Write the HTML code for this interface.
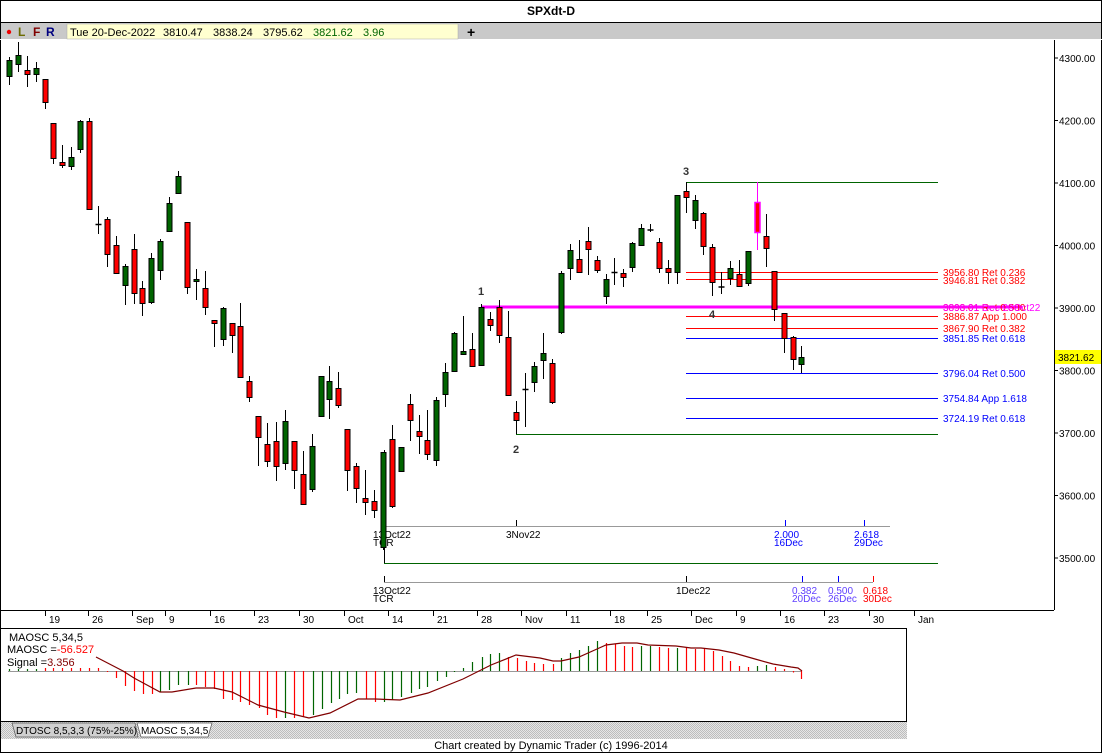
<!DOCTYPE html><html><head><meta charset="utf-8"><style>
body{margin:0;background:#fff;}
svg{display:block;font-family:"Liberation Sans",sans-serif;}
</style></head><body>
<svg id="s" width="1102" height="753" xmlns="http://www.w3.org/2000/svg">
<defs><pattern id="h" width="2" height="2" patternUnits="userSpaceOnUse"><rect width="2" height="2" fill="#e6e6e6"/><rect width="1" height="1" fill="#bdbdbd"/><rect x="1" y="1" width="1" height="1" fill="#bdbdbd"/></pattern></defs>
<rect x="0.5" y="0.5" width="1101" height="752" fill="#fff" stroke="#000"/>
<text x="551" y="15" font-size="12" font-weight="bold" text-anchor="middle">SPXdt-D</text>
<line x1="0" y1="22.5" x2="1102" y2="22.5" stroke="#000"/>
<rect x="1" y="23" width="1100" height="17" fill="#c9c9c9"/>
<line x1="0" y1="39.5" x2="1102" y2="39.5" stroke="#fff"/>
<circle cx="9" cy="32" r="2.2" fill="#e00"/>
<text x="18" y="36" font-size="12" font-weight="bold" fill="#6b6b00">L</text>
<text x="33" y="36" font-size="12" font-weight="bold" fill="#800000">F</text>
<text x="46" y="36" font-size="12" font-weight="bold" fill="#000080">R</text>
<rect x="67" y="24" width="391" height="15" fill="#ffffd0" stroke="#aaa" stroke-width="0.5"/>
<g font-size="11"><text x="70" y="36">Tue 20-Dec-2022</text><text x="163" y="36">3810.47</text><text x="213" y="36">3838.24</text><text x="263" y="36">3795.62</text><text x="313" y="36" fill="#006400">3821.62</text><text x="363" y="36" fill="#006400">3.96</text></g>
<text x="467" y="37" font-size="14" font-weight="bold">+</text>
<line x1="1054.5" y1="40" x2="1054.5" y2="610" stroke="#000"/>
<g id="pax" font-size="10"></g>
<rect x="1055" y="350" width="46" height="14" fill="#ffff00"/>
<text x="1058" y="361" font-size="10">3821.62</text>
<line x1="686" y1="182.5" x2="938" y2="182.5" stroke="#006400"/>
<line x1="686.5" y1="182" x2="686.5" y2="190" stroke="#000"/>
<g stroke="#f00"><line x1="686" y1="272.5" x2="938" y2="272.5"/><line x1="686" y1="279.5" x2="938" y2="279.5"/><line x1="686" y1="316.5" x2="938" y2="316.5"/><line x1="686" y1="328.5" x2="938" y2="328.5"/></g>
<g stroke="#00f"><line x1="686" y1="338.5" x2="938" y2="338.5"/><line x1="686" y1="373.5" x2="938" y2="373.5"/><line x1="686" y1="398.5" x2="938" y2="398.5"/><line x1="686" y1="418.5" x2="938" y2="418.5"/></g>
<line x1="516" y1="434.5" x2="938" y2="434.5" stroke="#006400"/>
<line x1="516.5" y1="420" x2="516.5" y2="434" stroke="#000"/>
<line x1="482" y1="307" x2="1022" y2="307" stroke="#ff00ff" stroke-width="3"/>
<g font-size="10"><text x="943" y="276" fill="#f00">3956.80 Ret 0.236</text><text x="943" y="284" fill="#f00">3946.81 Ret 0.382</text>
<text x="943" y="311" fill="#f00">3893.01 Ret 0.500</text><text x="943" y="311" fill="#ff00ff">3898.91 Dec 28Oct22</text>
<text x="943" y="320" fill="#f00">3886.87 App 1.000</text><text x="943" y="332" fill="#f00">3867.90 Ret 0.382</text>
<text x="943" y="342" fill="#00f">3851.85 Ret 0.618</text><text x="943" y="377" fill="#00f">3796.04 Ret 0.500</text>
<text x="943" y="402" fill="#00f">3754.84 App 1.618</text><text x="943" y="422" fill="#00f">3724.19 Ret 0.618</text></g>
<g font-size="11" font-weight="bold" fill="#333"><text x="478" y="295">1</text><text x="513" y="453">2</text><text x="683" y="175">3</text><text x="709" y="318">4</text></g>
<line x1="384" y1="526.5" x2="890" y2="526.5" stroke="#999"/>
<line x1="516.5" y1="520" x2="516.5" y2="526" stroke="#000"/>
<line x1="785.5" y1="520" x2="785.5" y2="526" stroke="#00f"/><line x1="864.5" y1="520" x2="864.5" y2="526" stroke="#00f"/>
<line x1="384.5" y1="450" x2="384.5" y2="563" stroke="#000"/>
<line x1="384" y1="563.5" x2="938" y2="563.5" stroke="#006400"/>
<line x1="384" y1="582.5" x2="873" y2="582.5" stroke="#999"/>
<g stroke="#000"><line x1="384.5" y1="576" x2="384.5" y2="582"/><line x1="686.5" y1="576" x2="686.5" y2="582"/></g>
<line x1="802.5" y1="576" x2="802.5" y2="582" stroke="#00f"/><line x1="838.5" y1="576" x2="838.5" y2="582" stroke="#00f"/><line x1="873.5" y1="576" x2="873.5" y2="582" stroke="#f00"/>
<g font-size="10"><text x="373" y="538">13Oct22</text><text x="373" y="546">TCR</text><text x="506" y="538">3Nov22</text>
<text x="774" y="538" fill="#00f">2.000</text><text x="774" y="546" fill="#00f">16Dec</text><text x="854" y="538" fill="#00f">2.618</text><text x="854" y="546" fill="#00f">29Dec</text>
<text x="373" y="594">13Oct22</text><text x="373" y="602">TCR</text><text x="676" y="594">1Dec22</text>
<text x="792" y="594" fill="#6040ff">0.382</text><text x="792" y="602" fill="#6040ff">20Dec</text><text x="828" y="594" fill="#6040ff">0.500</text><text x="828" y="602" fill="#6040ff">26Dec</text><text x="863" y="594" fill="#f00">0.618</text><text x="863" y="602" fill="#f00">30Dec</text></g>
<g id="cd"></g>
<line x1="0" y1="610.5" x2="1054" y2="610.5" stroke="#000"/>
<g id="dax" font-size="10"></g>
<rect x="0.5" y="628.5" width="906" height="93" fill="#fff" stroke="#000"/>
<line x1="8" y1="671.5" x2="801" y2="671.5" stroke="#999"/>
<g id="hist"></g>
<polyline id="sig" fill="none" stroke="#800000" stroke-width="1.2"/>
<g font-size="11"><text x="9" y="641">MAOSC 5,34,5</text><text x="7" y="653">MAOSC =<tspan fill="#f00">-56.527</tspan></text><text x="7" y="666">Signal =<tspan fill="#800000">3.356</tspan></text></g>
<rect x="1" y="722" width="906" height="17" fill="url(#h)"/>
<path d="M12 723 L135 723 L138 737 L16 737 Z" fill="#d0d0d0" stroke="#555" stroke-width="0.7"/>
<path d="M137 723 L212 723 L208 737 L141 737 Z" fill="#fff" stroke="#555" stroke-width="0.7"/>
<text x="16" y="734" font-size="10">DTOSC 8,5,3,3 (75%-25%)</text>
<text x="141" y="734" font-size="10">MAOSC 5,34,5</text>
<text x="551" y="749" font-size="11" text-anchor="middle">Chart created by Dynamic Trader  (c) 1996-2014</text>
</svg>
<script>
var NS="http://www.w3.org/2000/svg";
function el(p,t,a,tx){var e=document.createElementNS(NS,t);for(var k in a)e.setAttribute(k,a[k]);if(tx)e.textContent=tx;document.getElementById(p).appendChild(e);return e;}
var P=[4300,4200,4100,4000,3900,3800,3700,3600,3500];
P.forEach(function(p){var y=58+(4300-p)*0.625;el("pax","line",{x1:1054,y1:y,x2:1058,y2:y,stroke:"#000"});el("pax","text",{x:1059,y:y+4},p.toFixed(2));});
var D=[[49,"19"],[92,"26"],[136,"Sep"],[169,"9"],[214,"16"],[258,"23"],[303,"30"],[348,"Oct"],[392,"14"],[437,"21"],[481,"28"],[525,"Nov"],[570,"11"],[614,"18"],[651,"25"],[695,"Dec"],[740,"9"],[784,"16"],[828,"23"],[873,"30"],[918,"Jan"]];
D.forEach(function(d){el("dax","line",{x1:d[0]-3.5,y1:611,x2:d[0]-3.5,y2:616,stroke:"#000"});el("dax","text",{x:d[0],y:623},d[1]);});
var C=[[9,57,85,60,76,"g"],[18,42,72,55,64,"g"],[27,56,87,70,74,"r"],[36,62,82,68,74,"g"],[45,79,109,79,102,"r"],[53,123,164,123,158,"r"],[62,145,168,162,165,"r"],[71,147,170,157,166,"g"],[80,120,153,121,149,"g"],[89,118,209,121,209,"r"],[98,206,234,224,226,"d"],[107,217,267,219,254,"r"],[116,236,274,245,273,"r"],[125,264,305,266,285,"g"],[134,234,304,249,293,"r"],[142,281,316,288,303,"r"],[151,253,304,258,302,"g"],[160,239,280,241,270,"g"],[169,197,231,203,231,"g"],[178,171,193,176,193,"g"],[187,222,294,222,287,"r"],[196,269,300,279,281,"g"],[205,271,315,288,307,"r"],[214,320,347,320,323,"r"],[223,307,346,308,339,"g"],[232,323,353,323,335,"r"],[240,303,377,326,377,"r"],[249,376,402,381,397,"r"],[258,416,466,416,437,"r"],[267,423,467,444,461,"r"],
[276,422,481,441,466,"r"],[285,410,470,421,463,"g"],[294,441,489,441,470,"r"],[303,451,505,474,504,"r"],[312,434,492,446,489,"g"],[321,376,416,376,416,"g"],[329,366,419,381,399,"g"],[338,372,408,388,405,"r"],[347,429,491,429,470,"r"],[356,463,503,466,488,"r"],[365,470,515,498,502,"r"],[374,490,518,501,510,"r"],[383,452,550,452,547,"g"],[392,425,508,439,506,"r"],[401,447,471,447,471,"g"],[410,394,441,404,420,"r"],[419,415,454,431,436,"r"],[427,410,460,440,454,"r"],[436,397,466,400,460,"g"],[445,363,407,372,394,"g"],[454,332,371,333,371,"g"],[463,316,355,351,354,"g"],[472,333,367,349,366,"r"],[481,304,365,307,365,"g"],[490,312,331,319,325,"r"],[499,300,343,307,335,"r"],[508,311,395,337,395,"r"],[516,401,430,412,420,"r"],[525,373,427,389,390,"d"],[534,362,392,366,382,"g"],[543,333,379,353,360,"g"],[552,359,404,363,402,"r"],
[561,271,334,273,332,"g"],[570,244,280,250,268,"g"],[579,240,273,259,272,"r"],[588,227,275,241,249,"r"],[597,256,273,260,270,"r"],[606,274,304,279,296,"g"],[614,258,285,272,273,"d"],[623,269,287,273,277,"r"],[632,242,272,243,267,"g"],[641,224,246,228,245,"g"],[650,224,232,229.5,230.5,"d"],[659,238,273,242,268,"r"],[668,260,284,268,272,"r"],[677,195,284,195,272,"g"],[686,182,213,191,197,"r"],[695,195,229,200,220,"g"],[703,212,255,213,246,"r"],[712,244,296,247,282,"r"],[721,272,294,286.5,287.5,"d"],[730,261,285,268,278,"g"],[739,260,287,274,286,"r"],[748,251,286,251,283,"g"],[757,182,250,202,232,"m"],[766,214,267,236,248,"r"],[774,271,321,271,309,"r"],[784,313,353,313,338,"r"],[793,336,370,337,359,"r"],[801,346,373,357,364,"g"]];
C.forEach(function(c){var x=c[0]+0.5;var wk=c[5]=="m"?"#ff00ff":"#000";el("cd","line",{x1:x,y1:c[1],x2:x,y2:c[2],stroke:wk});
if(c[5]=="d"){el("cd","line",{x1:x-3,y1:c[3]+0.5,x2:x+3,y2:c[3]+0.5,stroke:"#000","stroke-width":1.5});return;}
var f=c[5]=="g"?"#006400":"#ff0000";el("cd","rect",{x:c[0]-2,y:c[3]+0.5,width:5,height:Math.max(2,c[4]-c[3]),fill:f,stroke:wk,"stroke-width":c[5]=="m"?1.5:1});});
var H=[[9,669,"g"],[18,669,"g"],[27,669,"g"],[36,669,"g"],[45,668,"r"],[53,668,"r"],[62,668,"r"],[71,668,"r"],[80,668,"r"],[89,668,"r"],[98,668,"r"],[107,672,"r"],[116,678,"r"],[125,686,"r"],[134,691,"r"],[143,694,"r"],[152,694,"r"],[160,692,"g"],[169,690,"g"],[178,685,"g"],[188,685,"g"],[196,685,"r"],[205,687,"r"],[214,689,"r"],[223,699,"r"],[232,700,"r"],[240,702,"r"],[249,705,"r"],[259,708,"r"],[267,715,"r"],[276,718,"r"],[285,718,"g"],[294,718,"r"],[303,717,"r"],[313,715,"g"],[322,709,"g"],[331,703,"g"],[339,699,"g"],[347,694,"g"],[356,693,"g"],[366,699,"r"],[375,702,"r"],[384,702,"g"],[392,700,"g"],[401,697,"g"],[411,693,"g"],[419,689,"g"],[427,687,"g"],[437,681,"g"],[446,677,"g"],[454,672,"g"],[463,668,"g"],[472,662,"g"],[482,657,"g"],[490,654,"g"],[499,653,"g"],[508,657,"r"],[517,658,"r"],[526,661,"r"],[534,663,"r"],[543,664,"r"],[553,664,"r"],[561,658,"g"],[570,653,"g"],[579,650,"g"],[588,646,"g"],[597,641,"g"],[606,643,"r"],[615,644,"r"],[624,646,"r"],[632,647,"r"],[641,646,"g"],[650,646,"g"],[659,647,"r"],[668,648,"r"],[677,648,"g"],[686,648,"r"],[695,649,"r"],[704,649,"r"],[713,651,"r"],[722,656,"r"],[730,661,"r"],[739,666,"r"],[748,667,"r"],[757,666,"g"],[766,665,"g"],[775,667,"r"],[784,669,"r"],[793,671,"r"],[801,679,"r"]];
H.forEach(function(h){var x=h[0]+0.5;var y1=Math.min(h[1],671),y2=Math.max(h[1],671);if(y2-y1<1)y2=y1+1.5;el("hist","line",{x1:x,y1:y1,x2:x,y2:y2,stroke:h[2]=="g"?"#006400":"#ff0000","stroke-width":1.2});});
var S=[[96,657],[123,671],[134,678],[160,692],[172,692],[196,688],[214,688],[232,692],[258,705],[284,712],[309,718],[330,713],[358,699],[375,699],[400,700],[428,693],[463,679],[491,665],[516,655],[540,658],[553,661],[561,661],[579,657],[597,649],[606,645],[622,643],[637,643],[648,645],[676,646],[691,648],[701,648],[719,650],[734,653],[755,659],[773,664],[791,667],[798,668],[802,671]];
document.getElementById("sig").setAttribute("points",S.map(function(p){return p.join(",")}).join(" "));
</script>
</body></html>
